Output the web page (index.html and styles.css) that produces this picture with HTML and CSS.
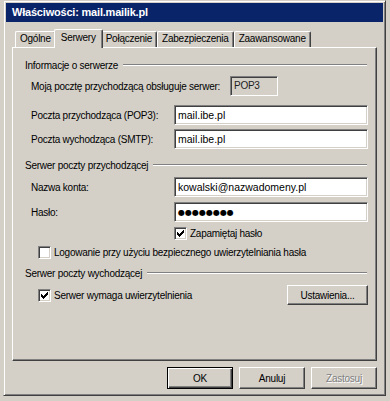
FILE: index.html
```html
<!DOCTYPE html>
<html lang="pl">
<head>
    <meta charset="UTF-8">
    <title>Właściwości: mail.mailik.pl</title>
    <link rel="stylesheet" href="styles.css">
</head>
<body>
    <div class="window">
        <div class="titlebar">Właściwości: mail.mailik.pl</div>
        <div class="dialog">
            <div class="tabs">
                <div class="tab">Ogólne</div>
                <div class="tab active">Serwery</div>
                <div class="tab">Połączenie</div>
                <div class="tab">Zabezpieczenia</div>
                <div class="tab">Zaawansowane</div>
            </div>

            <div class="panel">
                <div class="group-title first"><span>Informacje o serwerze</span><i class="rule"></i></div>
                <div class="row row-info">
                    <span class="info-label">Moją pocztę przychodzącą obsługuje serwer:</span>
                    <span class="static">POP3</span>
                </div>
                <div class="row row-gap">
                    <span class="label">Poczta przychodząca (POP3):</span>
                    <div class="field">mail.ibe.pl</div>
                </div>
                <div class="row row-tight">
                    <span class="label">Poczta wychodząca (SMTP):</span>
                    <div class="field">mail.ibe.pl</div>
                </div>

                <div class="group-title"><span>Serwer poczty przychodzącej</span><i class="rule"></i></div>
                <div class="row">
                    <span class="label">Nazwa konta:</span>
                    <div class="field">kowalski@nazwadomeny.pl</div>
                </div>
                <div class="row">
                    <span class="label">Hasło:</span>
                    <div class="field password">●●●●●●●●</div>
                </div>
                <div class="check-row aligned">
                    <span class="checkbox checked"><svg width="7" height="7" viewBox="0 0 7 7"><path d="M6 0h1v1h-1zM5 1h2v1h-2zM0 2h1v1h-1zM4 2h3v1h-3zM0 3h2v1h-2zM3 3h3v1h-3zM0 4h5v1h-5zM1 5h3v1h-3zM2 6h1v1h-1z"/></svg></span>
                    <span>Zapamiętaj hasło</span>
                </div>
                <div class="check-row">
                    <span class="checkbox"></span>
                    <span>Logowanie przy użyciu bezpiecznego uwierzytelniania hasła</span>
                </div>

                <div class="group-title group-last"><span>Serwer poczty wychodzącej</span><i class="rule"></i></div>
                <div class="row">
                    <div class="check-inline">
                        <span class="checkbox checked"><svg width="7" height="7" viewBox="0 0 7 7"><path d="M6 0h1v1h-1zM5 1h2v1h-2zM0 2h1v1h-1zM4 2h3v1h-3zM0 3h2v1h-2zM3 3h3v1h-3zM0 4h5v1h-5zM1 5h3v1h-3zM2 6h1v1h-1z"/></svg></span>
                        <span>Serwer wymaga uwierzytelnienia</span>
                    </div>
                    <button class="btn btn-settings">Ustawienia...</button>
                </div>
            </div>

            <div class="buttons">
                <button class="btn default">OK</button>
                <button class="btn">Anuluj</button>
                <button class="btn" disabled>Zastosuj</button>
            </div>
        </div>
    </div>
</body>
</html>
```

FILE: styles.css
```css
/* Classic Windows dialog */
body {
    margin: 0;
    background: #d4d0c8;
    font-family: 'Liberation Sans', Arial, sans-serif;
    font-size: 10px;
    letter-spacing: -0.25px;
    color: #000;
}

.window {
    box-sizing: border-box;
    width: 383px;
    height: 396px;
    margin-left: 3px;
    padding: 2px;
    border: 1px solid;
    border-color: #d4d0c8 #404040 #404040 #d4d0c8;
    box-shadow: inset 1px 1px #fff, inset -1px -1px #808080;
}

.titlebar {
    height: 19px;
    line-height: 19px;
    padding-left: 6px;
    background: #0a246a;
    color: #fff;
    font-size: 11px;
    font-weight: bold;
    letter-spacing: -0.2px;
}

.dialog {
    padding: 7px 6px 0 6px;
}

/* Tabs */
.tabs {
    display: flex;
    align-items: flex-end;
    height: 18px;
    padding-left: 3px;
}

.tab {
    box-sizing: border-box;
    height: 16px;
    line-height: 14px;
    padding: 0 4px;
    border-top: 1px solid #fff;
    border-left: 1px solid #fff;
    border-right: 1px solid #404040;
    border-radius: 2px 2px 0 0;
    box-shadow: inset -1px 0 #808080;
}

.tab.active {
    position: relative;
    z-index: 1;
    height: 19px;
    margin: 0 -2px -1px -2px;
    padding: 0 6px;
    line-height: 16px;
    background: #d4d0c8;
}

/* Panel */
.panel {
    box-sizing: border-box;
    height: 314px;
    padding: 10px 8px 0 12px;
    border: 1px solid;
    border-color: #fff #404040 #404040 #fff;
    box-shadow: inset -1px -1px #808080;
}

.group-title {
    display: flex;
    align-items: center;
    height: 14px;
    margin-top: 9px;
}

.group-title.first {
    margin-top: 0;
}

.group-title.group-last {
    margin-top: 7px;
}

.rule {
    flex: 1;
    margin: 0 1px 0 5px;
    border-top: 1px solid #808080;
    border-bottom: 1px solid #fff;
}

.row {
    display: flex;
    align-items: center;
    height: 20px;
    margin-top: 5px;
    padding-left: 6px;
}

.row-info {
    margin-top: 4px;
}

.row-gap {
    margin-top: 9px;
}

.row-tight {
    margin-top: 4px;
}

.info-label {
    width: 199px;
    flex: none;
}

.label {
    width: 143px;
    flex: none;
}

.static,
.field {
    box-sizing: border-box;
    height: 20px;
    padding: 2px 3px 0;
    border: 1px solid;
    border-color: #808080 #fff #fff #808080;
    box-shadow: inset 1px 1px #404040, inset -1px -1px #d4d0c8;
}

.static {
    width: 48px;
    line-height: 13px;
    color: #222;
}

.field {
    flex: 1;
    background: #fff;
    font-size: 10.5px;
    letter-spacing: 0;
    line-height: 15px;
}

.field.password {
    font-family: 'DejaVu Sans', sans-serif;
    font-size: 8px;
    line-height: 15px;
}

/* Checkboxes */
.check-row {
    display: flex;
    align-items: center;
    gap: 3px;
    height: 14px;
    margin-top: 5px;
    padding-left: 13px;
}

.check-row.aligned {
    margin-top: 4px;
    padding-left: 149px;
}

.check-inline {
    display: flex;
    align-items: center;
    gap: 3px;
    padding-left: 7px;
}

.checkbox {
    box-sizing: border-box;
    width: 13px;
    height: 13px;
    flex: none;
    display: flex;
    align-items: center;
    justify-content: center;
    background: #fff;
    border: 1px solid;
    border-color: #808080 #fff #fff #808080;
    box-shadow: inset 1px 1px #404040, inset -1px -1px #d4d0c8;
}

.checkbox svg {
    fill: #000;
    shape-rendering: crispEdges;
}

/* Buttons */
.btn {
    box-sizing: border-box;
    width: 66px;
    height: 22px;
    padding: 0;
    font: inherit;
    letter-spacing: inherit;
    color: #000;
    background: #d4d0c8;
    border: 1px solid;
    border-color: #fff #404040 #404040 #fff;
    box-shadow: inset -1px -1px #808080;
}

.btn.default {
    border-color: #000;
    box-shadow: inset 1px 1px #fff, inset -1px -1px #404040, inset -2px -2px #808080;
}

.btn:disabled {
    color: #808080;
    text-shadow: 1px 1px #fff;
}

.btn-settings {
    width: 81px;
    height: 20px;
    margin-left: auto;
}

.buttons {
    display: flex;
    justify-content: flex-end;
    gap: 6px;
    margin-top: 6px;
}
```
